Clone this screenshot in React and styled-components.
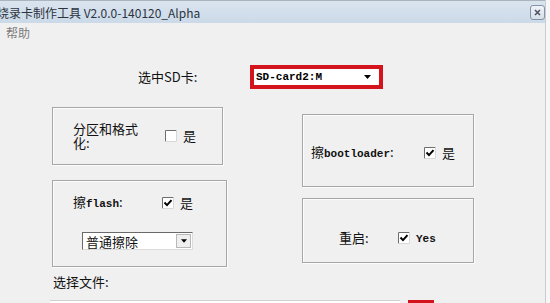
import React from "react";
import styled, { createGlobalStyle } from "styled-components";

const GlobalStyle = createGlobalStyle`
  html, body {
    margin: 0;
    padding: 0;
    background: #f7f7f7;
    overflow: hidden;
  }
  body {
    font-family: "Noto Sans CJK SC", "DejaVu Sans", sans-serif;
  }
`;

const Window = styled.div`
  width: 545px;
  height: 303px;
  background: #f0f0f0;
  border-right: 1px solid #c9cdd2;
  display: flex;
  flex-direction: column;
  overflow: hidden;
`;

const TitleBar = styled.div`
  height: 23px;
  flex: none;
  display: flex;
  align-items: center;
  justify-content: space-between;
  padding-right: 0;
  border-top: 1px solid #aab4bf;
  box-sizing: border-box;
  background: linear-gradient(#dae4ef, #cbd9e8);
`;

const Title = styled.div`
  margin-left: -3px;
  font-size: 12px;
  color: #2c3440;
  white-space: nowrap;
`;

const CloseButton = styled.div`
  width: 13px;
  height: 13px;
  border: 1px solid #8393a8;
  border-radius: 3px;
  background: linear-gradient(#f1f4f8, #d6dee8);
  display: flex;
  align-items: center;
  justify-content: center;
`;

const MenuBar = styled.div`
  height: 22px;
  flex: none;
  padding: 2px 0 0 6px;
  box-sizing: border-box;
  font-size: 12px;
  line-height: 16px;
  color: #7c7c7c;
`;

const Content = styled.div`
  display: flex;
  flex-direction: column;
  padding-left: 52px;
`;

const SdRow = styled.div`
  margin-top: 20px;
  display: flex;
  align-items: center;
  padding-left: 86px;
`;

const Label = styled.div`
  font-size: 13px;
  line-height: 14px;
  color: #111;
  width: ${(p) => p.$width || "auto"};
  margin-right: ${(p) => p.$gap || 0}px;
  flex: none;
`;

const Mono = styled.span`
  font-family: "Liberation Mono", "DejaVu Sans Mono", monospace;
  font-size: 11px;
  font-weight: bold;
`;

const RedCombo = styled.div`
  width: 133px;
  height: 24px;
  box-sizing: border-box;
  border: 4px solid #d3141d;
  background: #fff;
  display: flex;
  align-items: center;
  justify-content: space-between;
  padding: 0 8px 0 2px;
`;

const Columns = styled.div`
  margin-top: 18px;
  display: flex;
  align-items: flex-start;
`;

const Column = styled.div`
  width: ${(p) => p.$w}px;
  display: flex;
  flex-direction: column;
  gap: ${(p) => p.$gap}px;
  margin-left: ${(p) => p.$offset || 0}px;
  margin-top: ${(p) => p.$top || 0}px;
`;

const Group = styled.div`
  width: ${(p) => p.$w}px;
  height: ${(p) => p.$h}px;
  box-sizing: border-box;
  border: 1px solid #a6a6a6;
  box-shadow: inset 1px 1px 0 #fcfcfc, 1px 1px 0 #fcfcfc;
  display: flex;
  flex-direction: column;
  justify-content: ${(p) => (p.$center ? "center" : "flex-start")};
  padding-top: ${(p) => p.$pt || 0}px;
  padding-left: ${(p) => p.$pl}px;
`;

const OptionRow = styled.div`
  display: flex;
  align-items: center;
`;

const CheckText = styled.span`
  margin-left: 6px;
  font-size: 13px;
  line-height: 14px;
  color: #111;
`;

const Box = styled.span`
  width: 12px;
  height: 12px;
  flex: none;
  display: inline-flex;
`;

const Select = styled.div`
  margin: 21px 0 0 9px;
  width: 111px;
  height: 18px;
  box-sizing: border-box;
  border-top: 1px solid #6a6a6a;
  border-left: 1px solid #6a6a6a;
  border-right: 1px solid #dcdcdc;
  border-bottom: 1px solid #dcdcdc;
  background: #fff;
  display: flex;
  align-items: center;
  justify-content: space-between;
  padding-left: 3px;
  font-size: 13px;
  color: #111;
`;

const DropButton = styled.div`
  width: 15px;
  height: 14px;
  margin-right: 1px;
  box-sizing: border-box;
  background: #efefef;
  border: 1px solid #b8b8b8;
  display: flex;
  align-items: center;
  justify-content: center;
`;

const FileLabel = styled.div`
  margin-top: 7px;
  margin-left: 1px;
  font-size: 13px;
  line-height: 16px;
  color: #111;
`;

const FileRow = styled.div`
  margin-top: 10px;
  margin-left: -2px;
  display: flex;
  gap: 8px;
`;

const FileInput = styled.div`
  width: 350px;
  height: 20px;
  background: #fff;
  border-top: 1px solid #d0d0d0;
`;

const BrowseButton = styled.div`
  width: 26px;
  height: 20px;
  background: #d3141d;
`;

const Arrow = ({ w = 7 }) => (
  <svg width={w} height="4" viewBox="0 0 7 4">
    <path d="M0 0h7L3.5 4z" fill="#000" />
  </svg>
);

const CheckBox = ({ checked }) => (
  <Box>
    <svg width="12" height="12" viewBox="0 0 12 12">
      <rect x="0" y="0" width="12" height="12" fill="#fff" />
      <path d="M0.5 11.5V0.5H11.5" stroke="#6e6e6e" fill="none" />
      <path d="M11.5 0.5V11.5H0.5" stroke="#d8d8d8" fill="none" />
      {checked && (
        <path d="M2.5 5.5l2.5 2.6 4.5-5" stroke="#000" strokeWidth="2" fill="none" />
      )}
    </svg>
  </Box>
);

const Option = ({ label, labelWidth, gap, checked, text = "是", mono }) => (
  <OptionRow>
    <Label $width={labelWidth} $gap={gap}>
      {label}
    </Label>
    <CheckBox checked={checked} />
    <CheckText>{mono ? <Mono>{text}</Mono> : text}</CheckText>
  </OptionRow>
);

const App = () => {
  return (
    <>
      <GlobalStyle />
      <Window>
        <TitleBar>
          <Title>烧录卡制作工具 V2.0.0-140120_Alpha</Title>
          <CloseButton>
            <svg width="7" height="7" viewBox="0 0 7 7">
              <path d="M1 1l5 5M6 1L1 6" stroke="#4a5463" strokeWidth="1.6" />
            </svg>
          </CloseButton>
        </TitleBar>
        <MenuBar>帮助</MenuBar>
        <Content>
          <SdRow>
            <Label $width="112px">选中SD卡:</Label>
            <RedCombo>
              <Mono>SD-card2:M</Mono>
              <Arrow />
            </RedCombo>
          </SdRow>
          <Columns>
            <Column $w={175} $gap={15}>
              <Group $w={171} $h={58} $pl={20} $center>
                <Option label="分区和格式化:" labelWidth="70px" gap={22} />
              </Group>
              <Group $w={175} $h={87} $pl={20} $pt={14}>
                <Option
                  label={<>擦<Mono>flash</Mono>:</>}
                  labelWidth="89px"
                  checked
                />
                <Select>
                  普通擦除
                  <DropButton>
                    <Arrow w={6} />
                  </DropButton>
                </Select>
              </Group>
            </Column>
            <Column $w={172} $gap={11} $offset={75} $top={7}>
              <Group $w={172} $h={73} $pl={8} $pt={5} $center>
                <Option
                  label={<>擦<Mono>bootloader</Mono>:</>}
                  labelWidth="113px"
                  checked
                />
              </Group>
              <Group $w={172} $h={65} $pl={36} $pt={14} $center>
                <Option label="重启:" labelWidth="59px" checked text="Yes" mono />
              </Group>
            </Column>
          </Columns>
          <FileLabel>选择文件:</FileLabel>
          <FileRow>
            <FileInput />
            <BrowseButton />
          </FileRow>
        </Content>
      </Window>
    </>
  );
};

export default App;
